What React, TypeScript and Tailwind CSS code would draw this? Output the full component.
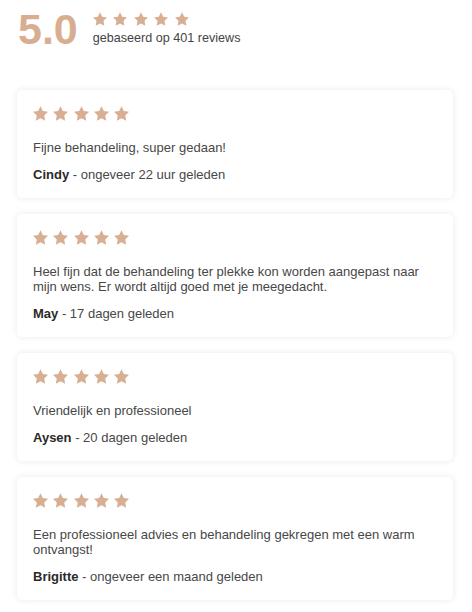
import React from "react";

const STAR_COLOR = "#d8af93";

function Star({ size }: { size: number }) {
  return (
    <svg
      width={size}
      height={size}
      viewBox="0 0 20 19.02"
      className="block shrink-0"
      aria-hidden="true"
    >
      <polygon
        fill={STAR_COLOR}
        points="10,0 13.09,6.26 20,7.27 15,12.14 16.18,19.02 10,15.77 3.82,19.02 5,12.14 0,7.27 6.91,6.26"
      />
    </svg>
  );
}

function Stars({ size, gapClass }: { size: number; gapClass: string }) {
  return (
    <div className={`flex items-center ${gapClass}`}>
      {[0, 1, 2, 3, 4].map((i) => (
        <Star key={i} size={size} />
      ))}
    </div>
  );
}

const reviews = [
  { text: "Fijne behandeling, super gedaan!", name: "Cindy", when: "ongeveer 22 uur geleden" },
  {
    text: "Heel fijn dat de behandeling ter plekke kon worden aangepast naar mijn wens. Er wordt altijd goed met je meegedacht.",
    name: "May",
    when: "17 dagen geleden",
  },
  { text: "Vriendelijk en professioneel", name: "Aysen", when: "20 dagen geleden" },
  {
    text: "Een professioneel advies en behandeling gekregen met een warm ontvangst!",
    name: "Brigitte",
    when: "ongeveer een maand geleden",
  },
];

export default function App() {
  return (
    <div
      className="min-h-[612px] w-[472px] bg-white pl-[17px] pr-[19px] pt-[8px]"
      style={{ fontFamily: '"Liberation Sans", Arial, sans-serif' }}
    >
      <div className="flex items-start gap-[15px]">
        <div className="pl-[1px] text-[43px] font-bold leading-[43px] text-[#d8ae91]">5.0</div>
        <div className="pt-[4px]">
          <Stars size={14} gapClass="gap-[6.5px]" />
          <div className="mt-[5px] text-[12.6px] leading-[15px] text-[#444444]">
            gebaseerd op 401 reviews
          </div>
        </div>
      </div>

      <div className="mt-[39px] flex flex-col gap-[16px]">
        {reviews.map((r) => (
          <div
            key={r.name}
            className="rounded-[5px] bg-white p-4 shadow-[0_0_7px_rgba(0,0,0,0.09)]"
          >
            <Stars size={15} gapClass="gap-[5.25px]" />
            <p className="mt-[19px] text-[13px] leading-[15px] text-[#474747]">{r.text}</p>
            <p className="mt-3 text-[13px] leading-[15px] text-[#474747]">
              <span className="font-bold text-[#2a2a2a]">{r.name}</span> - {r.when}
            </p>
          </div>
        ))}
      </div>
    </div>
  );
}
